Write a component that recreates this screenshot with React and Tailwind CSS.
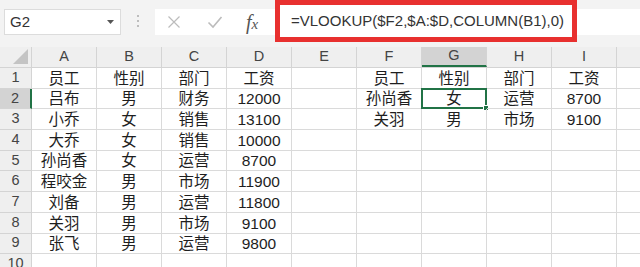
import { Fragment } from 'react';

const COLS = ['A', 'B', 'C', 'D', 'E', 'F', 'G', 'H', 'I', ''];

const ROWS = [
  ['员工', '性别', '部门', '工资', '', '员工', '性别', '部门', '工资', ''],
  ['吕布', '男', '财务', '12000', '', '孙尚香', '女', '运营', '8700', ''],
  ['小乔', '女', '销售', '13100', '', '关羽', '男', '市场', '9100', ''],
  ['大乔', '女', '销售', '10000', '', '', '', '', '', ''],
  ['孙尚香', '女', '运营', '8700', '', '', '', '', '', ''],
  ['程咬金', '男', '市场', '11900', '', '', '', '', '', ''],
  ['刘备', '男', '运营', '11800', '', '', '', '', '', ''],
  ['关羽', '男', '市场', '9100', '', '', '', '', '', ''],
  ['张飞', '男', '运营', '9800', '', '', '', '', '', ''],
  ['', '', '', '', '', '', '', '', '', ''],
];

const FormulaBar = () => (
  <div className="h-[47px] bg-[#f3f3f3] flex items-start">
    <div className="mt-[9px] ml-[4px] w-[117px] h-[26px] bg-white border border-[#dcdcdc] flex items-center justify-between pl-[5px] pr-[6px]">
      <span className="text-[15px] text-[#333]">G2</span>
      <svg width="7" height="4" viewBox="0 0 7 4"><path d="M0 0h7L3.5 4z" fill="#555" /></svg>
    </div>
    <div className="mt-[15px] w-[34px] flex flex-col items-center gap-[3px]">
      <span className="w-[2px] h-[2px] bg-[#bdbdbd]" />
      <span className="w-[2px] h-[2px] bg-[#bdbdbd]" />
      <span className="w-[2px] h-[2px] bg-[#bdbdbd]" />
    </div>
    <div className="mt-[9px] w-[120px] h-[26px] bg-white flex items-center">
      <svg className="ml-[12px]" width="14" height="14" viewBox="0 0 14 14">
        <path d="M1.5 1.5l11 11M12.5 1.5l-11 11" stroke="#bcbcbc" strokeWidth="1.2" fill="none" />
      </svg>
      <svg className="ml-[26px]" width="16" height="14" viewBox="0 0 16 14">
        <path d="M1.5 7.5l4.5 4.5L14.5 2" stroke="#bcbcbc" strokeWidth="1.6" fill="none" />
      </svg>
      <span className="ml-[23px] text-[20px] italic text-[#555] leading-none" style={{ fontFamily: '"Liberation Serif", serif' }}>
        f<span className="text-[15px]">x</span>
      </span>
    </div>
    <div className="w-[302px] h-[42px] border-[5px] border-[#e8302f] bg-white flex items-center pl-[11px]">
      <span className="text-[15px] text-[#333] whitespace-nowrap">=VLOOKUP($F2,$A:$D,COLUMN(B1),0)</span>
    </div>
    <div className="mt-[9px] flex-1 h-[26px] bg-white" />
  </div>
);

const App = () => {
  return (
    <div
      className="w-[640px] h-[267px] overflow-hidden bg-white"
      style={{ fontFamily: '"Liberation Sans", "Noto Sans CJK SC", sans-serif' }}
    >
      <FormulaBar />

      <div className="flex h-[21px] bg-[#efefef] border-b border-[#d4d4d4]">
        <div className="w-[32px] shrink-0 border-r border-[#d4d4d4] relative">
          <svg className="absolute right-[3px] bottom-[3px]" width="15" height="15" viewBox="0 0 15 15">
            <path d="M15 0v15H0z" fill="#c4c4c4" />
          </svg>
        </div>
        {COLS.map((c, i) => (
          <div
            key={i}
            className={`w-[65px] shrink-0 flex items-center justify-center text-[14.5px] text-[#444] border-r border-[#d4d4d4] ${
              c === 'G' ? 'bg-[#d3d3d3] border-b-2 border-b-[#217346]' : ''
            }`}
          >
            {c}
          </div>
        ))}
      </div>

      {ROWS.map((row, r) => (
        <div key={r} className="flex h-[20.7px]">
          <div
            className={`w-[32px] shrink-0 flex items-center justify-center text-[14.5px] text-[#444] border-b border-[#d4d4d4] ${
              r === 1 ? 'bg-[#d3d3d3] border-r-2 border-r-[#217346]' : 'bg-[#efefef] border-r border-r-[#d4d4d4]'
            }`}
          >
            {r + 1}
          </div>
          {row.map((v, c) => (
            <Fragment key={c}>
              <div className="relative w-[65px] shrink-0 flex items-center justify-center pt-[1px] text-[15.5px] text-[#1e1e1e] border-r border-b border-[#dadada] whitespace-nowrap">
                {v}
                {r === 1 && c === 6 && (
                  <div className="absolute -left-[1px] -top-[1px] w-[66px] h-[21.7px] border-2 border-[#217346]">
                    <div className="absolute -right-[4px] -bottom-[4px] w-[6px] h-[6px] bg-[#217346] border border-white" />
                  </div>
                )}
              </div>
            </Fragment>
          ))}
        </div>
      ))}
    </div>
  );
};

export default App;
